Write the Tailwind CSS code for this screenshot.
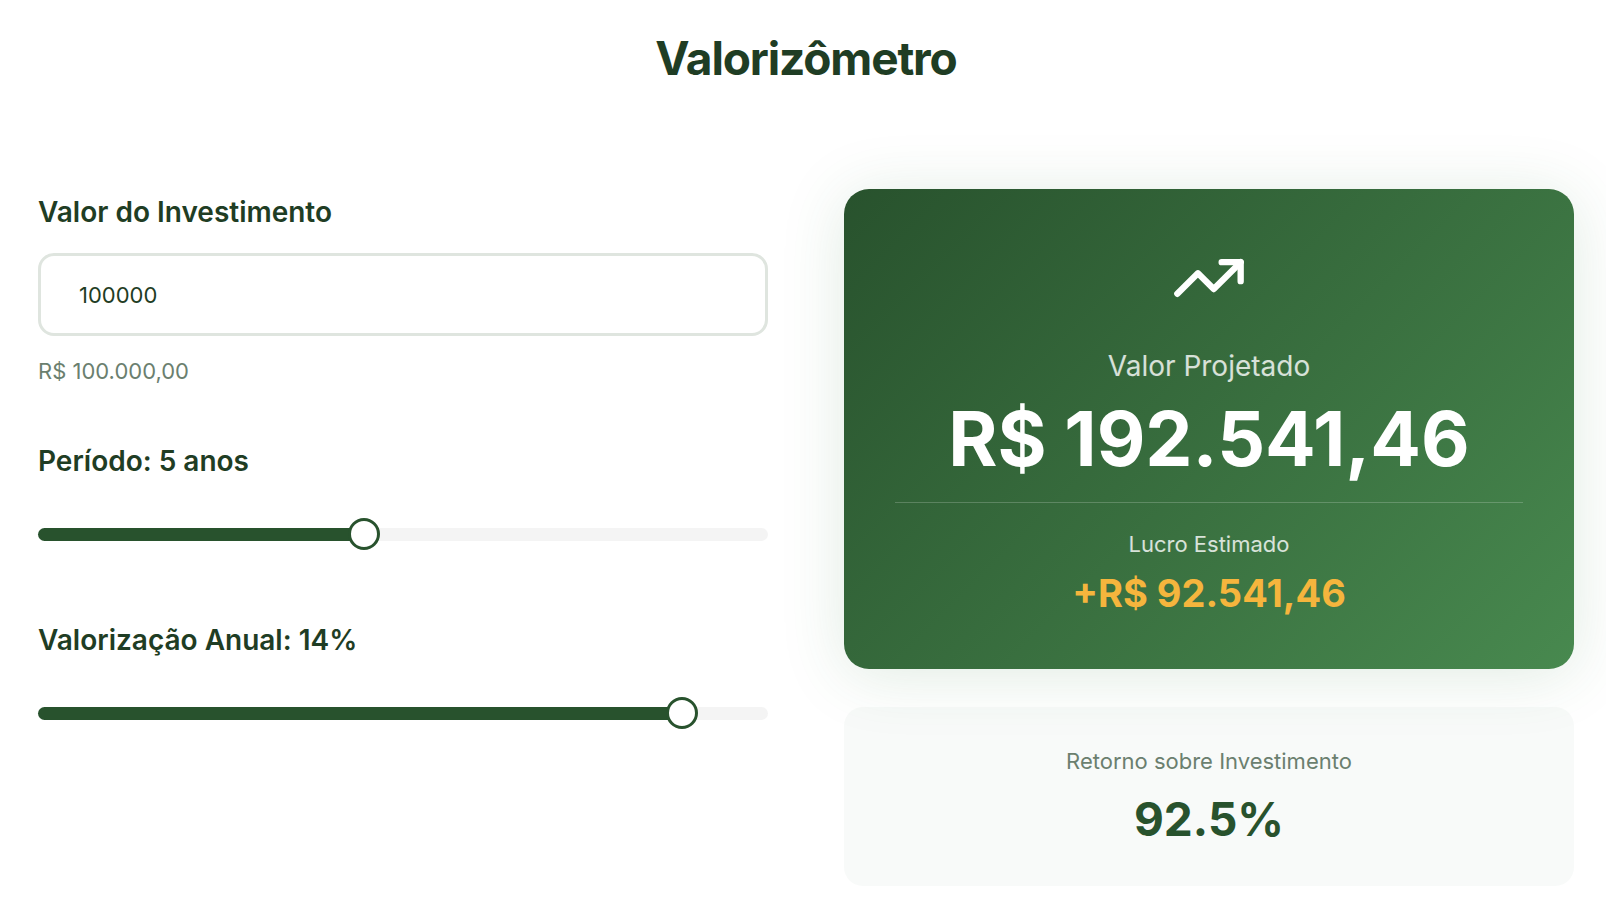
<!DOCTYPE html>
<html lang="pt-BR">
<head>
    <meta charset="UTF-8">
    <meta name="viewport" content="width=device-width, initial-scale=1.0">
    <title>Valorizômetro</title>
    <script src="https://cdn.jsdelivr.net/npm/@tailwindcss/browser@4"></script>
</head>
<body class="bg-white font-['Inter',sans-serif] text-[#1f3d24]">
    <main class="pl-[38px] pr-8 pt-[29px] pb-9">
        <h1 class="text-center text-[46px] leading-[58px] font-bold tracking-tight mb-[102px]">Valorizômetro</h1>

        <div class="grid grid-cols-2 gap-[76px]">
            <!-- Inputs -->
            <div class="flex flex-col gap-[51px]">
                <div>
                    <label for="amount" class="block text-[28px] leading-[46px] font-semibold">Valor do Investimento</label>
                    <input id="amount" type="text" inputmode="numeric" value="100000"
                        class="block w-full mt-[18px] h-[83px] px-[38px] rounded-2xl border-3 border-[#dfe5df] bg-white text-[22px] leading-8 outline-none">
                    <p id="amountText" class="mt-[19px] text-[22px] leading-8 text-[#6b7f6f]">R$ 100.000,00</p>
                </div>

                <div>
                    <label for="years" class="block text-[28px] leading-[46px] font-semibold">Período: <span id="yearsText">5</span> anos</label>
                    <div class="mt-[18px] py-4">
                        <input id="years" type="range" min="1" max="10" value="5" style="--fill: 44.4%"
                            class="block w-full h-8 appearance-none bg-transparent cursor-pointer [&::-webkit-slider-runnable-track]:h-[13px] [&::-webkit-slider-runnable-track]:rounded-full [&::-webkit-slider-runnable-track]:bg-[linear-gradient(to_right,#28522d_var(--fill),#f4f4f4_var(--fill))] [&::-webkit-slider-thumb]:appearance-none [&::-webkit-slider-thumb]:size-8 [&::-webkit-slider-thumb]:-mt-[10px] [&::-webkit-slider-thumb]:rounded-full [&::-webkit-slider-thumb]:border-3 [&::-webkit-slider-thumb]:border-solid [&::-webkit-slider-thumb]:border-[#28522d] [&::-webkit-slider-thumb]:bg-white">
                    </div>
                </div>

                <div>
                    <label for="rate" class="block text-[28px] leading-[46px] font-semibold">Valorização Anual: <span id="rateText">14</span>%</label>
                    <div class="mt-[18px] py-4">
                        <input id="rate" type="range" min="5" max="15" value="14" style="--fill: 90%"
                            class="block w-full h-8 appearance-none bg-transparent cursor-pointer [&::-webkit-slider-runnable-track]:h-[13px] [&::-webkit-slider-runnable-track]:rounded-full [&::-webkit-slider-runnable-track]:bg-[linear-gradient(to_right,#28522d_var(--fill),#f4f4f4_var(--fill))] [&::-webkit-slider-thumb]:appearance-none [&::-webkit-slider-thumb]:size-8 [&::-webkit-slider-thumb]:-mt-[10px] [&::-webkit-slider-thumb]:rounded-full [&::-webkit-slider-thumb]:border-3 [&::-webkit-slider-thumb]:border-solid [&::-webkit-slider-thumb]:border-[#28522d] [&::-webkit-slider-thumb]:bg-white">
                    </div>
                </div>
            </div>

            <!-- Results -->
            <div class="flex flex-col gap-[38px] text-center">
                <div class="p-[51px] rounded-[25px] bg-[linear-gradient(135deg,#28522d,#48894f)] text-white shadow-[0_6px_64px_rgba(45,122,58,0.15)]">
                    <svg class="size-[76px] mx-auto mb-[27px]" viewBox="0 0 24 24" fill="none" stroke="currentColor" stroke-width="2" stroke-linecap="round" stroke-linejoin="round">
                        <path d="M16 7h6v6"/>
                        <path d="m22 7-8.5 8.5-5-5L2 17"/>
                    </svg>
                    <p class="text-[28px] leading-[46px] text-white/80">Valor Projetado</p>
                    <p id="projected" class="mt-3 text-[75px] leading-[76px] font-bold">R$ 192.541,46</p>
                    <div class="mt-[25px] pt-[25px] border-t border-white/20">
                        <p class="text-[22px] leading-8 text-white/80">Lucro Estimado</p>
                        <p id="profit" class="mt-2 text-[38px] leading-[50px] font-bold text-[#f5b53d]">+R$ 92.541,46</p>
                    </div>
                </div>

                <div class="p-[38px] rounded-[19px] bg-[#285241]/3">
                    <p class="text-[22px] leading-8 text-[#6b7f6f]">Retorno sobre Investimento</p>
                    <p id="roi" class="mt-[13px] text-[46px] leading-[58px] font-bold text-[#28522d]">92.5%</p>
                </div>
            </div>
        </div>
    </main>

    <script>
        const amount = document.getElementById("amount");
        const years = document.getElementById("years");
        const rate = document.getElementById("rate");

        const money = value => value.toLocaleString("pt-BR", { style: "currency", currency: "BRL" });

        function paintTrack(slider) {
            const fraction = (slider.value - slider.min) / (slider.max - slider.min);
            slider.style.setProperty("--fill", `${fraction * 100}%`);
        }

        function update() {
            const initial = Number(amount.value) || 0;
            const projected = initial * Math.pow(1 + rate.value / 100, years.value);
            const profit = projected - initial;

            document.getElementById("amountText").textContent = money(initial);
            document.getElementById("yearsText").textContent = years.value;
            document.getElementById("rateText").textContent = rate.value;
            document.getElementById("projected").textContent = money(projected);
            document.getElementById("profit").textContent = `+${money(profit)}`;
            document.getElementById("roi").textContent = `${(initial ? profit / initial * 100 : 0).toFixed(1)}%`;
            paintTrack(years);
            paintTrack(rate);
        }

        [amount, years, rate].forEach(input => input.addEventListener("input", update));
        update();
    </script>
</body>
</html>
